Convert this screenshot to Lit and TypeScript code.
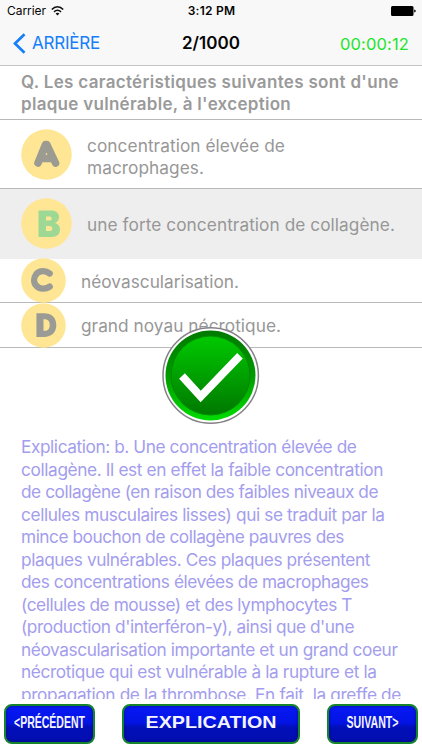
import { LitElement, html, css, svg } from "lit";
import { customElement, property } from "lit/decorators.js";

/** One line of text whose tracking is set so that it fills a given width. */
@customElement("fit-line")
class FitLine extends LitElement {
  @property() text = "";
  @property({ type: Number }) width = 0;
  static styles = css`
    :host { display: block; white-space: pre; }
    span { display: inline-block; }
  `;
  render() {
    return html`<span>${this.text}</span>`;
  }
  updated() {
    const span = this.renderRoot.querySelector("span") as HTMLElement;
    span.style.letterSpacing = "0px";
    const natural = span.getBoundingClientRect().width;
    span.style.letterSpacing = `${(this.width - natural) / this.text.length}px`;
  }
}

type Line = [string, number];

const question: Line[] = [
  ["Q. Les caractéristiques suivantes sont d'une", 378],
  ["plaque vulnérable, à l'exception", 270],
];

const answers: { key: string; lines: Line[] }[] = [
  { key: "a", lines: [["concentration élevée de", 198], ["macrophages.", 117]] },
  { key: "b", lines: [["une forte concentration de collagène.", 308]] },
  { key: "c", lines: [["néovascularisation.", 158]] },
  { key: "d", lines: [["grand noyau nécrotique.", 200]] },
];

const explanation: Line[] = [
  ["Explication: b. Une concentration élevée de", 335.5],
  ["collagène. Il est en effet la faible concentration", 362],
  ["de collagène (en raison des faibles niveaux de", 357],
  ["cellules musculaires lisses) qui se traduit par la", 363.5],
  ["mince bouchon de collagène pauvres des", 323],
  ["plaques vulnérables. Ces plaques présentent", 349],
  ["des concentrations élevées de macrophages", 347.5],
  ["(cellules de mousse) et des lymphocytes T", 331],
  ["(production d'interféron-y), ainsi que d'une", 333],
  ["néovascularisation importante et un grand coeur", 376.5],
  ["nécrotique qui est vulnérable à la rupture et la", 355.5],
  ["propagation de la thrombose. En fait, la greffe de", 380],
];

const letters: Record<string, unknown> = {
  a: svg`<path d="M17 34L24.600 15.500H25.800L34.500 34M21 29.500H30" fill="none" stroke="#9b9b92" stroke-width="7.600" stroke-linecap="round" stroke-linejoin="round"/>`,
  b: svg`<path fill-rule="evenodd" fill="#9ed895" d="M17.500 12.500H30C35 12.500 38 15 38 19C38 22 36.500 24 34 25C37.500 26 39 28.500 39 31.500C39 36 36 39 30.500 39H17.500ZM25 18.500V22.500H28.500C31.500 22.500 31.500 18.500 28.500 18.500ZM25 28V33H29C32 33 32 28 29 28Z"/>`,
  c: svg`<path d="M32.500 17.500C28 13.800 21 14 17.500 18C14 22.500 14 28 17.500 31.500C21 35.500 28 35.800 32.500 32.500" fill="none" stroke="#9b9b96" stroke-width="7.200" stroke-linecap="round"/>`,
  d: svg`<path fill-rule="evenodd" fill="#9b9b96" d="M17.500 11.500H26C35 11.500 40 16.500 40 25C40 33.500 35 38.500 26 38.500H17.500ZM25.500 18.500V31.500H26.500C31 31.500 32.500 29.500 32.500 25C32.500 21 31 18.500 26.500 18.500Z"/>`,
};

@customElement("app-root")
class AppRoot extends LitElement {
  static styles = css`
    :host { display: flex; flex-direction: column; position: relative; box-sizing: border-box; width: 422px; height: 750px; overflow: hidden; background: #fff; font-family: Inter, "Liberation Sans", sans-serif; color: #9a9a9a; }
    svg { display: block; }
    header { height: 65px; flex: none; background: #f8f8f8; border-bottom: 1px solid #c4c4c4; color: #050505; }
    .status { display: grid; grid-template-columns: 1fr auto 1fr; align-items: center; height: 22px; padding: 0 6px 0 7px; font-size: 12px; line-height: 22px; }
    .carrier { display: flex; align-items: center; gap: 5px; }
    .clock { font-weight: 600; }
    .battery { justify-self: end; }
    .nav { display: grid; grid-template-columns: 1fr auto 1fr; align-items: center; height: 42px; padding: 0 13px; }
    .back { display: flex; align-items: center; gap: 6px; color: #167efb; font-size: 17px; }
    .title { font-size: 17px; font-weight: 600; }
    .timer { justify-self: end; color: #21e52b; font-size: 16.500px; padding-top: 2px; }
    .question { height: 54px; box-sizing: border-box; flex: none; padding: 5px 0 0 21px; font-size: 17px; line-height: 22px; font-weight: 600; border-bottom: 1px solid #b9b9b9; }
    .row { box-sizing: border-box; flex: none; display: flex; align-items: center; gap: 15px; border-bottom: 1px solid #b9b9b9; padding-left: 21px; font-size: 17.250px; line-height: 22px; color: #979797; }
    .lines { padding-top: 2px; }
    .a { height: 69px; }
    .a .lines { padding-top: 5px; }
    .b { height: 70px; background: #eee; border-bottom-color: #eee; }
    .c { height: 44px; }
    .d { height: 45px; }
    .icon { flex: none; width: 51px; height: 51px; }
    .c .icon, .d .icon { width: 45px; height: 45px; }
    .explain { flex: none; height: 264px; overflow: hidden; margin-top: 88px; padding-left: 21px; font-size: 17.250px; line-height: 22.500px; color: #a39ded; }
    .check { position: absolute; left: 161px; top: 326px; }
    footer { position: absolute; left: 0; right: 0; bottom: 0; height: 51px; background: #fff; display: flex; justify-content: space-between; align-items: flex-start; padding: 5px 4px 0 4px; box-sizing: border-box; }
    .btn { box-sizing: border-box; height: 40px; border: 2px solid #16832d; border-radius: 8px; background: linear-gradient(#0718f5, #0314e4 46%, #020fb8 60%, #020eae); box-shadow: inset 0 0 3px #0006; }
    .btn text { font-family: "Liberation Sans", sans-serif; font-weight: 700; fill: #f4f4ff; }
  `;

  private button(label: string, w: number, size: number, len: number) {
    return html`<div class="btn" style="width:${w}px">
      <svg width=${w - 4} height="36"><text x=${(w - 4) / 2} y=${16.2 + size * 0.36} text-anchor="middle" font-size=${size} textLength=${len} lengthAdjust="spacingAndGlyphs">${label}</text></svg>
    </div>`;
  }

  render() {
    const line = ([text, width]: Line) => html`<fit-line .text=${text} .width=${width}></fit-line>`;
    return html`
      <header>
        <div class="status">
          <div class="carrier"><fit-line .text=${"Carrier"} .width=${39}></fit-line>
            <svg width="13" height="10" viewBox="0 0 13 10" fill="none" stroke="#111" stroke-width="1.500"><path d="M.8 3.600C4-.1 9-.1 12.200 3.600M3 5.900C5.200 3.700 7.800 3.700 10 5.900"/><path d="M6.500 9.500L4.600 7.500C5.700 6.500 7.300 6.500 8.400 7.500Z" fill="#111" stroke="none"/></svg>
          </div>
          <fit-line class="clock" .text=${"3:12 PM"} .width=${47.5}></fit-line>
          <svg class="battery" width="25" height="10"><rect width="22.500" height="10" rx="1.500"/><path d="M23.200 3.500C25.200 4 25.200 6 23.200 6.500Z"/></svg>
        </div>
        <div class="nav">
          <div class="back"><svg width="13" height="21" viewBox="0 0 13 21"><path d="M11.500 1.200L2 10.500L11.500 19.800" fill="none" stroke="#167efb" stroke-width="2.700"/></svg><fit-line .text=${"ARRIÈRE"} .width=${68}></fit-line></div>
          <fit-line class="title" .text=${"2/1000"} .width=${58}></fit-line>
          <fit-line class="timer" .text=${"00:00:12"} .width=${69}></fit-line>
        </div>
      </header>
      <div class="question">${question.map(line)}</div>
      ${answers.map(
        (a) => html`<div class="row ${a.key}">
          <svg class="icon" viewBox="0 0 51 51"><circle cx="25.500" cy="25.500" r="25.300" fill="#ffe694"/>${letters[a.key]}</svg>
          <div class="lines">${a.lines.map(line)}</div>
        </div>`
      )}
      <div class="explain">${explanation.map(line)}</div>
      <svg class="check" width="99" height="99" viewBox="0 0 99 99">
        <defs>
          <linearGradient id="rim" x1="0" y1="0" x2="0" y2="1"><stop offset="0" stop-color="#007a00"/><stop offset=".5" stop-color="#009a00"/><stop offset="1" stop-color="#00dc00"/></linearGradient>
          <linearGradient id="face" x1="0" y1="0" x2="0" y2="1"><stop offset="0" stop-color="#00c900"/><stop offset="1" stop-color="#007800"/></linearGradient>
        </defs>
        <circle cx="49.700" cy="49.500" r="47.700" fill="#fff" stroke="#858087" stroke-width="1.500"/>
        <circle cx="49.500" cy="49.500" r="45" fill="url(#rim)"/>
        <circle cx="49.500" cy="49.500" r="39.500" fill="url(#face)" stroke="#008a00" stroke-width="1"/>
        <path d="M21 50L39.700 70.500L79 29.800" fill="none" stroke="#fff" stroke-width="7.800"/>
      </svg>
      <footer>
        ${this.button("<PRÉCÉDENT", 91, 16.3, 71)}
        ${this.button("EXPLICATION", 178, 16.5, 131)}
        ${this.button("SUIVANT>", 91, 16.3, 52)}
      </footer>
    `;
  }
}
